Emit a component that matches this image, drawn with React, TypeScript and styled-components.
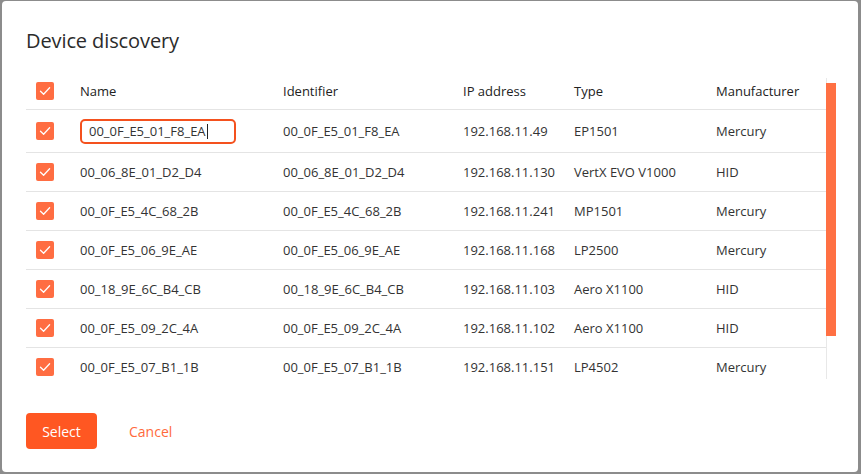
import React from "react";
import styled, { createGlobalStyle } from "styled-components";

const GlobalStyle = createGlobalStyle`
  html, body {
    margin: 0;
    padding: 0;
    background: #8c8c8c;
    font-family: "Open Sans", "Noto Sans", Arial, sans-serif;
  }
`;

type Device = {
  name: string;
  identifier: string;
  ip: string;
  type: string;
  manufacturer: string;
};

const devices: Device[] = [
  { name: "00_0F_E5_01_F8_EA", identifier: "00_0F_E5_01_F8_EA", ip: "192.168.11.49", type: "EP1501", manufacturer: "Mercury" },
  { name: "00_06_8E_01_D2_D4", identifier: "00_06_8E_01_D2_D4", ip: "192.168.11.130", type: "VertX EVO V1000", manufacturer: "HID" },
  { name: "00_0F_E5_4C_68_2B", identifier: "00_0F_E5_4C_68_2B", ip: "192.168.11.241", type: "MP1501", manufacturer: "Mercury" },
  { name: "00_0F_E5_06_9E_AE", identifier: "00_0F_E5_06_9E_AE", ip: "192.168.11.168", type: "LP2500", manufacturer: "Mercury" },
  { name: "00_18_9E_6C_B4_CB", identifier: "00_18_9E_6C_B4_CB", ip: "192.168.11.103", type: "Aero X1100", manufacturer: "HID" },
  { name: "00_0F_E5_09_2C_4A", identifier: "00_0F_E5_09_2C_4A", ip: "192.168.11.102", type: "Aero X1100", manufacturer: "HID" },
  { name: "00_0F_E5_07_B1_1B", identifier: "00_0F_E5_07_B1_1B", ip: "192.168.11.151", type: "LP4502", manufacturer: "Mercury" },
];

const Dialog = styled.div`
  box-sizing: border-box;
  margin: 1px 3px 2px 2px;
  height: 471px;
  background: #fff;
  border-radius: 4px;
  padding: 27px 0 0 24px;
  display: flex;
  flex-direction: column;
`;

const Title = styled.h2`
  margin: 0;
  font-size: 20px;
  font-weight: 400;
  color: #2b2b2b;
  line-height: 26px;
  letter-spacing: -0.1px;
`;

const TableArea = styled.div`
  margin-top: 19px;
  display: flex;
  height: 306px;
  overflow: hidden;
`;

const Table = styled.div`
  width: 800px;
  display: flex;
  flex-direction: column;
`;

const Row = styled.div<{ $height: number }>`
  display: grid;
  grid-template-columns: 44px 203px 180px 111px 142px 1fr;
  align-items: center;
  height: ${({ $height }) => $height}px;
  padding-left: 10px;
  border-bottom: 1px solid #e4e4e4;
  flex-shrink: 0;
  font-size: 13px;
  color: #333;
`;

const HeaderCell = styled.div`
  color: #222;
  font-weight: 500;
`;

const Cell = styled.div`
  white-space: nowrap;
`;

const Check = styled.div`
  width: 18px;
  height: 18px;
  border-radius: 2px;
  background: #ff6d42;
  display: flex;
  align-items: center;
  justify-content: center;
`;

const NameInput = styled.div`
  box-sizing: border-box;
  width: 156px;
  height: 25px;
  border: 2px solid #f4511e;
  border-radius: 5px;
  padding-left: 7px;
  display: flex;
  align-items: center;
  color: #333;
`;

const Caret = styled.span`
  display: inline-block;
  width: 1px;
  height: 15px;
  background: #222;
  margin-left: 1px;
`;

const ScrollTrack = styled.div`
  margin-top: 5px;
  width: 10px;
  border-left: 1px solid #e8e8e8;
`;

const ScrollThumb = styled.div`
  margin-top: 5px;
  margin-left: -1px;
  width: 10px;
  height: 253px;
  background: #ff7043;
`;

const Footer = styled.div`
  margin-top: 34px;
  display: flex;
  align-items: center;
  gap: 32px;
`;

const PrimaryButton = styled.button`
  height: 36px;
  width: 71px;
  border: none;
  border-radius: 4px;
  background: #ff5722;
  color: #fff;
  font-family: inherit;
  font-size: 14px;
  cursor: pointer;
`;

const TextButton = styled.button`
  border: none;
  background: none;
  padding: 0;
  color: #ff6a3d;
  font-family: inherit;
  font-size: 14px;
  cursor: pointer;
`;

const CheckMark = () => (
  <svg width="12" height="10" viewBox="0 0 12 10">
    <path d="M1.5 5.2 L4.6 8.2 L10.6 1.8" fill="none" stroke="#fff" strokeWidth="1.3" strokeLinecap="round" strokeLinejoin="round" />
  </svg>
);

const Checkbox = () => (
  <Check>
    <CheckMark />
  </Check>
);

export default function App() {
  return (
    <>
      <GlobalStyle />
      <Dialog>
        <Title>Device discovery</Title>
        <TableArea>
          <Table>
            <Row $height={36}>
              <Checkbox />
              <HeaderCell>Name</HeaderCell>
              <HeaderCell>Identifier</HeaderCell>
              <HeaderCell>IP address</HeaderCell>
              <HeaderCell>Type</HeaderCell>
              <HeaderCell>Manufacturer</HeaderCell>
            </Row>
            {devices.map((d, i) => (
              <Row key={d.identifier} $height={i === 0 ? 42 : 38}>
                <Checkbox />
                {i === 0 ? (
                  <div>
                    <NameInput>
                      {d.name}
                      <Caret />
                    </NameInput>
                  </div>
                ) : (
                  <Cell>{d.name}</Cell>
                )}
                <Cell>{d.identifier}</Cell>
                <Cell>{d.ip}</Cell>
                <Cell>{d.type}</Cell>
                <Cell>{d.manufacturer}</Cell>
              </Row>
            ))}
          </Table>
          <ScrollTrack>
            <ScrollThumb />
          </ScrollTrack>
        </TableArea>
        <Footer>
          <PrimaryButton>Select</PrimaryButton>
          <TextButton>Cancel</TextButton>
        </Footer>
      </Dialog>
    </>
  );
}
